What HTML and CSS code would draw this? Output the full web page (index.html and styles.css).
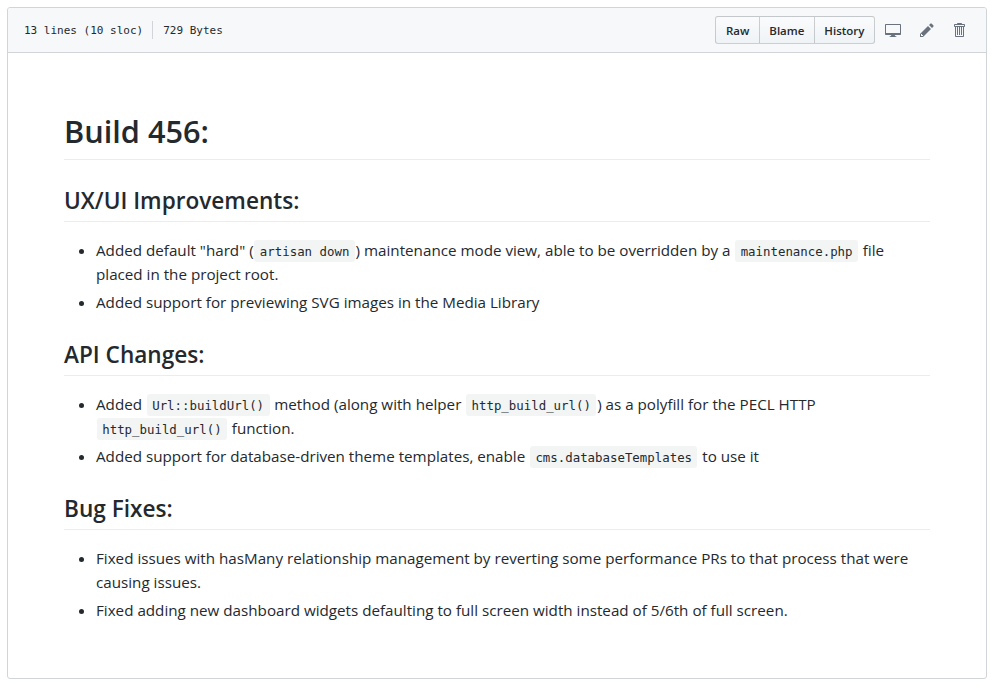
FILE: index.html
```html
<!DOCTYPE html>
<html lang="en">
<head>
<meta charset="utf-8">
<title>Build 456</title>
<link rel="stylesheet" href="styles.css">
</head>
<body>
<div class="file">
  <div class="file-header">
    <div class="file-info">
      <span class="info-item">13 lines (10 sloc)</span>
      <span class="divider"></span>
      <span class="info-item">729 Bytes</span>
    </div>
    <div class="file-actions">
      <div class="btn-group">
        <a class="btn">Raw</a>
        <a class="btn">Blame</a>
        <a class="btn">History</a>
      </div>
      <svg class="icon icon-desktop" width="16" height="16" viewBox="0 0 16 16"><path d="M15 2H1c-.55 0-1 .45-1 1v9c0 .55.45 1 1 1h5.34c-.25.61-.86 1.39-2.34 2h8c-1.48-.61-2.09-1.39-2.34-2H15c.55 0 1-.45 1-1V3c0-.55-.45-1-1-1zm0 9H1V3h14v8z"/></svg>
      <svg class="icon icon-pencil" width="14" height="16" viewBox="0 0 14 16"><path d="M0 12v3h3l8-8-3-3-8 8zm3 2H1v-2h1v1h1v1zm10.3-9.3L12 6 9 3l1.3-1.3a.996.996 0 011.41 0l1.59 1.59c.39.39.39 1.02 0 1.41z"/></svg>
      <svg class="icon icon-trash" width="12" height="16" viewBox="0 0 12 16"><path d="M11 2H9c0-.55-.45-1-1-1H5c-.55 0-1 .45-1 1H2c-.55 0-1 .45-1 1v1c0 .55.45 1 1 1v9c0 .55.45 1 1 1h7c.55 0 1-.45 1-1V5c.55 0 1-.45 1-1V3c0-.55-.45-1-1-1zm-1 12H3V5h1v8h1V5h1v8h1V5h1v8h1V5h1v9zm1-10H2V3h9v1z"/></svg>
    </div>
  </div>
  <article class="markdown">
    <h1>Build 456:</h1>
    <h2>UX/UI Improvements:</h2>
    <ul>
      <li>Added default "hard" (<code>artisan down</code>) maintenance mode view, able to be overridden by a <code>maintenance.php</code> file placed in the project root.</li>
      <li>Added support for previewing SVG images in the Media Library</li>
    </ul>
    <h2>API Changes:</h2>
    <ul>
      <li>Added <code>Url::buildUrl()</code> method (along with helper <code>http_build_url()</code>) as a polyfill for the PECL HTTP <code>http_build_url()</code> function.</li>
      <li>Added support for database-driven theme templates, enable <code>cms.databaseTemplates</code> to use it</li>
    </ul>
    <h2>Bug Fixes:</h2>
    <ul>
      <li>Fixed issues with hasMany relationship management by reverting some performance PRs to that process that were causing issues.</li>
      <li>Fixed adding new dashboard widgets defaulting to full screen width instead of 5/6th of full screen.</li>
    </ul>
  </article>
</div>
</body>
</html>
```

FILE: styles.css
```css
* { box-sizing: border-box; }
html, body { background: #fff; }
body {
  margin: 7px 10px 8px 7px;
  font-family: "Open Sans", "Noto Sans", sans-serif;
  color: #24292e;
}
.file {
  border: 1px solid #d1d5da;
  border-radius: 3px;
}
.file-header {
  display: flex;
  align-items: center;
  justify-content: space-between;
  height: 45px;
  padding: 0 21px 0 16px;
  background: #f6f8fa;
  border-bottom: 1px solid #d1d5da;
  border-radius: 3px 3px 0 0;
}
.file-info {
  display: flex;
  align-items: center;
  font-family: "DejaVu Sans Mono", monospace;
  font-size: 11px;
  color: #24292e;
}
.divider {
  width: 1px;
  height: 18px;
  margin: 0 10px 0 9px;
  background: #d1d5da;
}
.file-actions {
  display: flex;
  align-items: center;
}
.btn-group { display: flex; margin-right: 10px; }
.btn {
  display: block;
  height: 28px;
  line-height: 27px;
  padding: 0 9.5px;
  font-size: 11.5px;
  font-weight: 600;
  color: #24292e;
  background: linear-gradient(#fafbfc, #eff3f6);
  border: 1px solid rgba(27, 31, 35, .2);
  margin-left: -1px;
}
.btn:first-child { margin-left: 0; border-radius: 3px 0 0 3px; }
.btn:last-child { border-radius: 0 3px 3px 0; }
.icon { fill: #6a737d; display: block; }
.icon-pencil { margin-left: 19px; }
.icon-trash { margin-left: 19px; }
.markdown {
  padding: 56px;
  font-size: 15.2px;
  line-height: 24px;
}
h1, h2 {
  margin: 24px 0 16px;
  font-weight: 600;
  border-bottom: 1px solid #eaecef;
}
h1 {
  margin-top: 0;
  font-size: 30.7px;
  line-height: 40px;
  padding-top: 1.5px;
  padding-bottom: 8.1px;
}
h2 {
  font-size: 22.6px;
  line-height: 30px;
  padding-top: 2px;
  padding-bottom: 5.2px;
}
ul {
  margin: 0 0 16px;
  padding-left: 32px;
}
ul:last-child { margin-bottom: 0; }
li + li { margin-top: 4px; }
code {
  font-family: "DejaVu Sans Mono", monospace;
  font-size: 12.4px;
  line-height: 1;
  padding: 3.5px 5.44px;
  margin: 0 .8px;
  background: rgba(27, 31, 35, .05);
  border-radius: 3px;
}
```
